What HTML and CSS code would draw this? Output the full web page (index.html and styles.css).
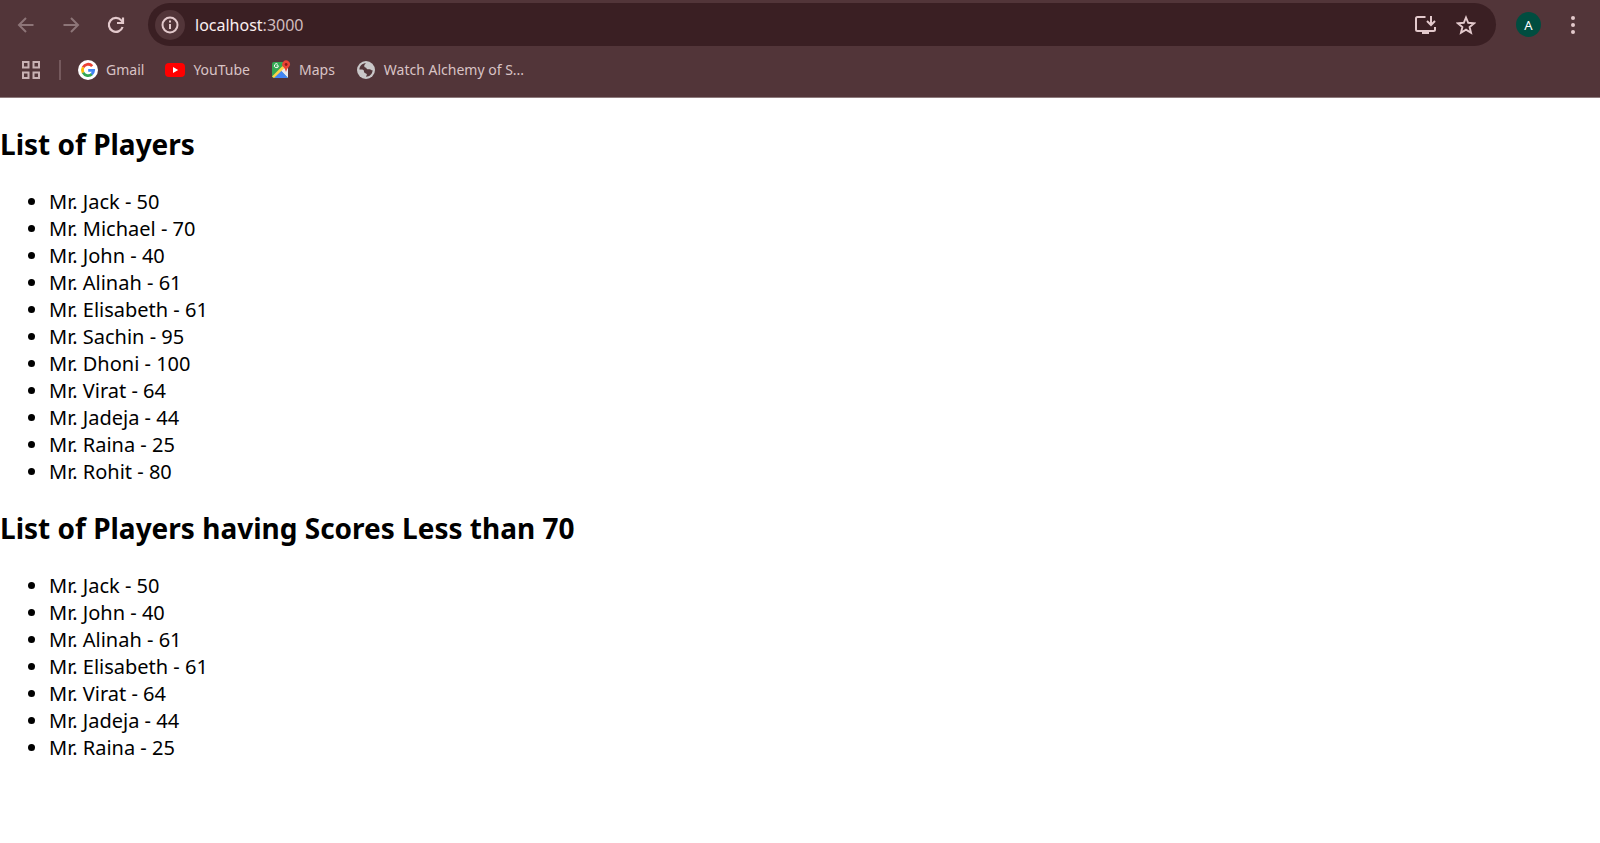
FILE: index.html
```html
<!DOCTYPE html>
<html lang="en">
<head>
<meta charset="utf-8">
<title>Players</title>
<link rel="stylesheet" href="styles.css">
</head>
<body>
<header class="browser">
  <div class="toolbar">
    <nav class="nav" aria-label="Navigation">
      <button class="icon-btn dim" aria-label="Back"><svg width="20" height="20" viewBox="0 0 20 20" fill="none" stroke="currentColor" stroke-width="2"><path d="M17.5 10H3.5M10 3L3 10l7 7"/></svg></button>
      <button class="icon-btn dim" aria-label="Forward"><svg width="20" height="20" viewBox="0 0 20 20" fill="none" stroke="currentColor" stroke-width="2"><path d="M2.500 10h14M10 3l7 7-7 7"/></svg></button>
      <button class="icon-btn" aria-label="Reload"><svg width="20" height="20" viewBox="0 0 20 20" fill="none" stroke="currentColor" stroke-width="2.200"><path d="M16.600 12A7 7 0 1 1 15.300 5.400L17 7.500"/><path d="M17 2.500V8h-6"/></svg></button>
    </nav>
    <div class="omnibox">
      <button class="site-info" aria-label="Site information"><svg width="20" height="20" viewBox="0 0 20 20" fill="none" stroke="currentColor" stroke-width="2"><circle cx="10" cy="10" r="7.500"/><path d="M10 9v5M10 5.500v2"/></svg></button>
      <a class="url" href="#">localhost<span class="port">:3000</span></a>
      <button class="icon-btn" aria-label="Install app"><svg width="24" height="20" viewBox="0 0 24 20" fill="none" stroke="currentColor" stroke-width="2"><path d="M12.500 2H4.500Q3 2 3 3.500v11Q3 16 4.500 16h16Q22 16 22 14.500V12"/><path d="M18 1v8M14 6l4 4 4-4"/><path d="M9 17.500h7" stroke-width="3"/></svg></button>
      <button class="icon-btn" aria-label="Bookmark this page"><svg width="20" height="20" viewBox="0 0 20 20" fill="none" stroke="currentColor" stroke-width="1.900"><path d="M10 2.500l2.200 5.300 5.900.5-4.500 3.800 1.400 5.700L10 14.700l-5 3.100 1.400-5.700L1.900 8.300l5.900-.5z"/></svg></button>
    </div>
    <button class="avatar" aria-label="Profile">A</button>
    <button class="icon-btn menu" aria-label="Menu"><svg width="20" height="20" viewBox="0 0 20 20" fill="currentColor"><circle cx="10" cy="3" r="2"/><circle cx="10" cy="10" r="2"/><circle cx="10" cy="17" r="2"/></svg></button>
  </div>
  <nav class="bookmarks" aria-label="Bookmarks">
    <button class="icon-btn apps" aria-label="Apps"><svg width="20" height="20" viewBox="0 0 20 20" fill="none" stroke="currentColor" stroke-width="2"><path d="M2 2h5.500v5.500H2zM12.500 2H18v5.500h-5.500zM2 12.500h5.500V18H2zM12.500 12.500H18V18h-5.500z"/></svg></button>
    <span class="divider"></span>
    <a class="bookmark" href="#"><svg width="20" height="20" viewBox="0 0 20 20"><circle cx="10" cy="10" r="10" fill="#fff"/><g fill="none" stroke-width="2.800"><path d="M5.100 7.300A5.600 5.600 0 0 1 14.200 6.100" stroke="#ea4335"/><path d="M5.100 12.700a5.600 5.600 0 0 1 0-5.400" stroke="#fbbc05"/><path d="M14 14a5.600 5.600 0 0 1-8.900-1.300" stroke="#34a853"/><path d="M10.200 10.300h5.400A5.600 5.600 0 0 1 13.700 14.200" stroke="#4285f4"/></g></svg>Gmail</a>
    <a class="bookmark" href="#"><svg width="20" height="20" viewBox="0 0 20 20"><rect y="3" width="20" height="14" rx="4" fill="#f00"/><path d="M8 7l5.200 3L8 13z" fill="#fff"/></svg>YouTube</a>
    <a class="bookmark" href="#"><svg width="20" height="20" viewBox="0 0 20 20"><path d="M3 2h14v16H3q-2 0-2-2V4q0-2 2-2z" fill="#34a853"/><path d="M17 8v10L9 10l4-4z" fill="#e8eaed"/><path d="M3 18L10 10.500 17 18z" fill="#4285f4"/><path d="M1 16.500L11.500 6l2 2L3 18z" fill="#fbd34a"/><path d="M7.300 5.800H5.500M6.800 4.300a2 2 0 1 0 .6 1.500" fill="none" stroke="#fff"/><path d="M15 12q-.4-3-2.400-4.800A3.800 3.800 0 1 1 17.800 7Q15.500 9 15 12z" fill="#ea4335"/><circle cx="15.100" cy="4.500" r="1.400" fill="#8c1d18"/></svg>Maps</a>
    <a class="bookmark" href="#"><svg width="20" height="20" viewBox="0 0 20 20"><circle cx="10" cy="10" r="9" fill="#c9c7c8"/><path d="M10 3.300c-1.200 1-2 2-1.700 3.100.3 1.200 2 .8 2.300 2 .2 1 1.600.9 3 .9 1.500 0 1.800 1.400 3 1-.1 3.600-2.900 6.500-6.600 6.500.2-1.200 1-1.400.8-2.500-.2-1-1.700-1-2.300-1.600-.8-.8-.3-2-1.100-2.600-1-.7-2.700-.5-4-.5C3.500 6 6.200 3.300 10 3.300z" fill="#523539"/></svg>Watch Alchemy of S...</a>
  </nav>
</header>
<main class="page">
  <h1 class="title">List of Players</h1>
  <ul class="players">
    <li>Mr. Jack - 50</li>
    <li>Mr. Michael - 70</li>
    <li>Mr. John - 40</li>
    <li>Mr. Alinah - 61</li>
    <li>Mr. Elisabeth - 61</li>
    <li>Mr. Sachin - 95</li>
    <li>Mr. Dhoni - 100</li>
    <li>Mr. Virat - 64</li>
    <li>Mr. Jadeja - 44</li>
    <li>Mr. Raina - 25</li>
    <li>Mr. Rohit - 80</li>
  </ul>
  <h1 class="title">List of Players having Scores Less than 70</h1>
  <ul class="players">
    <li>Mr. Jack - 50</li>
    <li>Mr. John - 40</li>
    <li>Mr. Alinah - 61</li>
    <li>Mr. Elisabeth - 61</li>
    <li>Mr. Virat - 64</li>
    <li>Mr. Jadeja - 44</li>
    <li>Mr. Raina - 25</li>
  </ul>
</main>
</body>
</html>
```

FILE: styles.css
```css
* {
  box-sizing: border-box;
}

body {
  margin: 0;
  background: #fff;
  color: #000;
  font-family: "Segoe UI", "Noto Sans", sans-serif;
}

button {
  padding: 0;
  border: 0;
  background: none;
  color: inherit;
  font: inherit;
}

svg {
  display: block;
  flex: none;
}

.browser {
  padding-top: 3px;
  border-bottom: 1px solid #8d7a7c;
  background: #523539;
  color: #e3c9cc;
}

.toolbar {
  display: flex;
  align-items: center;
  padding: 0 17px 0 16px;
}

.nav {
  display: flex;
  gap: 25px;
  margin-right: 22px;
}

.icon-btn {
  flex: none;
}

.dim {
  color: #8d7578;
}

.omnibox {
  display: flex;
  flex: 1;
  align-items: center;
  gap: 19px;
  height: 43px;
  padding: 0 20px 0 7px;
  border-radius: 22px;
  background: #3a1f23;
}

.site-info {
  display: grid;
  place-items: center;
  width: 30px;
  height: 30px;
  border-radius: 50%;
  background: #523539;
}

.url {
  flex: 1;
  margin-left: -9px;
  color: #fbeff0;
  font-size: 16px;
  text-decoration: none;
}

.port {
  color: #d0bbbd;
}

.avatar {
  width: 25px;
  height: 25px;
  margin: 0 22px 0 20px;
  border-radius: 50%;
  background: #004d40;
  color: #fff;
  font-size: 13px;
}

.bookmarks {
  display: flex;
  align-items: center;
  height: 51px;
  padding: 0 0 4px 21px;
}

.apps {
  color: #c8b1b4;
}

.divider {
  width: 2px;
  height: 20px;
  margin: 0 17px 0 18px;
  background: #75595d;
}

.bookmark {
  display: flex;
  align-items: center;
  gap: 8px;
  margin-right: 21px;
  color: #d9c3c5;
  font-size: 14px;
  text-decoration: none;
}

.title {
  margin: 0;
  padding: 26px 0 24px;
  font-size: 28px;
  line-height: 40px;
}

.players {
  margin: 0;
  padding-left: 49px;
  font-size: 20px;
  line-height: 27px;
}

.players + .title {
  padding-top: 23px;
}
```
